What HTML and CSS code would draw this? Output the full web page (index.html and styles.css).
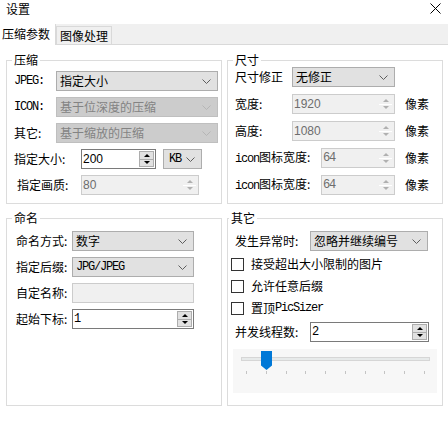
FILE: index.html
```html
<!DOCTYPE html>
<html lang="zh-CN">
<head>
  <meta charset="utf-8">
  <title>设置</title>
  <link rel="stylesheet" href="styles.css">
</head>
<body>

  <div class="titlebar">
    <span>设置</span>
    <svg class="close" width="11" height="11" viewBox="0 0 11 11"><path d="M0.5 0.5L10.5 10.5M10.5 0.5L0.5 10.5" stroke="#000" stroke-width="1" fill="none"/></svg>
  </div>

  <div class="tabs">
    <div class="tab active">压缩参数</div>
    <div class="tab">图像处理</div>
  </div>

  <div class="panel">

    <!-- 压缩 -->
    <fieldset class="group compress">
      <legend>压缩</legend>
      <div class="row">
        <span class="lbl w42 latin">JPEG:</span>
        <div class="select w162">指定大小<svg class="chev" width="9" height="5" viewBox="0 0 9 5"><path d="M0.5 0.5L4.5 4.5L8.5 0.5"/></svg></div>
      </div>
      <div class="row">
        <span class="lbl w42 latin">ICON:</span>
        <div class="select w162 off">基于位深度的压缩<svg class="chev" width="9" height="5" viewBox="0 0 9 5"><path d="M0.5 0.5L4.5 4.5L8.5 0.5"/></svg></div>
      </div>
      <div class="row">
        <span class="lbl w42">其它:</span>
        <div class="select w162 off">基于缩放的压缩<svg class="chev" width="9" height="5" viewBox="0 0 9 5"><path d="M0.5 0.5L4.5 4.5L8.5 0.5"/></svg></div>
      </div>
      <div class="row">
        <span class="lbl w67">指定大小:</span>
        <div class="spin w75"><span class="val">200</span><span class="btns"><i class="up"></i><i class="dn"></i></span></div>
        <div class="select w39 unit"><span class="latin">KB</span><svg class="chev" width="9" height="5" viewBox="0 0 9 5"><path d="M0.5 0.5L4.5 4.5L8.5 0.5"/></svg></div>
      </div>
      <div class="row">
        <span class="lbl w67 indent">指定画质:</span>
        <div class="spin w118 off"><span class="val">80</span><span class="btns"><i class="up"></i><i class="dn"></i></span></div>
      </div>
    </fieldset>

    <!-- 尺寸 -->
    <fieldset class="group size">
      <legend>尺寸</legend>
      <div class="row">
        <span class="lbl w57">尺寸修正</span>
        <div class="select w103">无修正<svg class="chev" width="9" height="5" viewBox="0 0 9 5"><path d="M0.5 0.5L4.5 4.5L8.5 0.5"/></svg></div>
      </div>
      <div class="row">
        <span class="lbl w57">宽度:</span>
        <div class="spin w103 off"><span class="val">1920</span><span class="btns"><i class="up"></i><i class="dn"></i></span></div>
        <span class="unit-lbl">像素</span>
      </div>
      <div class="row">
        <span class="lbl w57">高度:</span>
        <div class="spin w103 off"><span class="val">1080</span><span class="btns"><i class="up"></i><i class="dn"></i></span></div>
        <span class="unit-lbl">像素</span>
      </div>
      <div class="row">
        <span class="lbl w86"><span class="latin">icon</span>图标宽度:</span>
        <div class="spin w74 off"><span class="val latin">64</span><span class="btns"><i class="up"></i><i class="dn"></i></span></div>
        <span class="unit-lbl">像素</span>
      </div>
      <div class="row">
        <span class="lbl w86"><span class="latin">icon</span>图标宽度:</span>
        <div class="spin w74 off"><span class="val latin">64</span><span class="btns"><i class="up"></i><i class="dn"></i></span></div>
        <span class="unit-lbl">像素</span>
      </div>
    </fieldset>

    <!-- 命名 -->
    <fieldset class="group naming">
      <legend>命名</legend>
      <div class="row">
        <span class="lbl w56">命名方式:</span>
        <div class="select w122">数字<svg class="chev" width="9" height="5" viewBox="0 0 9 5"><path d="M0.5 0.5L4.5 4.5L8.5 0.5"/></svg></div>
      </div>
      <div class="row">
        <span class="lbl w56">指定后缀:</span>
        <div class="select w122"><span class="latin">JPG/JPEG</span><svg class="chev" width="9" height="5" viewBox="0 0 9 5"><path d="M0.5 0.5L4.5 4.5L8.5 0.5"/></svg></div>
      </div>
      <div class="row">
        <span class="lbl w56">自定名称:</span>
        <div class="text w122 off"></div>
      </div>
      <div class="row">
        <span class="lbl w56">起始下标:</span>
        <div class="spin w122"><span class="val latin">1</span><span class="btns"><i class="up"></i><i class="dn"></i></span></div>
      </div>
    </fieldset>

    <!-- 其它 -->
    <fieldset class="group other">
      <legend>其它</legend>
      <div class="row">
        <span class="lbl w75">发生异常时:</span>
        <div class="select w118">忽略并继续编号<svg class="chev" width="9" height="5" viewBox="0 0 9 5"><path d="M0.5 0.5L4.5 4.5L8.5 0.5"/></svg></div>
      </div>
      <label class="check"><span class="box"></span>接受超出大小限制的图片</label>
      <label class="check"><span class="box"></span>允许任意后缀</label>
      <label class="check"><span class="box"></span>置顶<span class="latin">PicSizer</span></label>
      <div class="row threads">
        <span class="lbl w75">并发线程数:</span>
        <div class="spin w119"><span class="val latin">2</span><span class="btns"><i class="up"></i><i class="dn"></i></span></div>
      </div>
      <div class="slider">
        <div class="track"></div>
        <div class="thumb" style="left: 28px"></div>
        <div class="ticks">
          <i></i><i></i><i></i><i></i><i></i><i></i><i></i><i></i><i></i><i></i>
        </div>
      </div>
    </fieldset>

  </div>

</body>
</html>
```

FILE: styles.css
```css
body { margin: 0; width: 448px; height: 429px; background: #fff; color: #000; font-family: "Noto Sans CJK SC", "Noto Sans", sans-serif; font-size: 12px; line-height: 18px; overflow: hidden; }
.latin { font-family: "Liberation Mono", monospace; font-size: 12px; letter-spacing: -1.2px; font-weight: normal; }

.titlebar { height: 24px; display: flex; justify-content: space-between; align-items: flex-start; padding: 0 7px 0 6px; box-sizing: border-box; }
.titlebar .close { margin-top: 3px; }

.tabs { height: 20px; background: #f0f0f0; border-bottom: 1px solid #d9d9d9; display: flex; align-items: flex-end; }
.tab { height: 17px; line-height: 17px; padding: 0 3px; border: 1px solid #d9d9d9; border-bottom: 0; background: #f0f0f0; font-size: 12px; }
.tab.active { height: 21px; line-height: 19px; width: 56px; box-sizing: border-box; padding: 0 2px; background: #fff; border-left: 0; border-top: 0; margin-bottom: -1px; }

.panel { display: grid; grid-template-columns: 216px 216px; column-gap: 5px; row-gap: 7px; padding: 8px 5px 0 6px; }

.group { margin: 0; min-width: 0; border: 1px solid #dcdcdc; padding: 0 6px 8px 7px; display: flex; flex-direction: column; }
.group legend { padding: 0 2px; margin-left: -2px; line-height: 14px; font-size: 12px; }
.compress { padding-top: 4px; gap: 6px; }
.size { padding-top: 0; gap: 7px; }
.naming { padding-top: 6px; gap: 6px; }
.naming .row { margin-left: 2px; }
.other { padding-top: 6px; padding-bottom: 12px; padding-left: 3px; }

.row { display: flex; align-items: center; height: 20px; }
.lbl { flex: none; white-space: nowrap; }
.lbl.indent { padding-left: 3px; box-sizing: border-box; }
.w42 { width: 42px; } .w56 { width: 56px; } .w57 { width: 57px; } .w67 { width: 67px; } .w75 { width: 75px; } .w86 { width: 86px; }
.other .lbl.w75 { width: 79px; padding-left: 4px; box-sizing: border-box; }

.select, .spin, .text { box-sizing: border-box; height: 20px; flex: none; display: flex; align-items: center; border: 1px solid #adadad; }
.w39 { width: 39px; } .w74 { width: 74px; } .w75 { width: 75px; } .w103 { width: 103px; } .w118 { width: 118px; } .w119 { width: 119px; } .w122 { width: 122px; } .w162 { width: 162px; }
.select.w39 { width: 39px; margin-left: 7px; }

.select { background: #e1e1e1; padding: 0 0 0 3px; justify-content: space-between; }
.select .chev { margin-right: 6px; fill: none; stroke: #5e5e5e; stroke-width: 1; }
.select.off { background: #cccccc; border-color: #bfbfbf; color: #838383; }
.select.off .chev { stroke: #b5b5b5; }
.select.unit { padding-left: 5px; }

.spin { background: #fff; border-color: #7a7a7a; padding-left: 1px; font-family: "Liberation Sans", sans-serif; font-size: 12px; justify-content: space-between; }
.spin .btns { align-self: stretch; width: 13px; margin: 1px; display: flex; flex-direction: column; border: 1px solid #adadad; background: #e1e1e1; color: #000; }
.spin .btns i { flex: 1; display: flex; align-items: center; justify-content: center; }
.spin .btns i + i { border-top: 1px solid #adadad; }
.spin .btns i::before { content: ""; border-left: 3px solid transparent; border-right: 3px solid transparent; }
.spin .btns .up::before { border-bottom: 3px solid currentColor; }
.spin .btns .dn::before { border-top: 3px solid currentColor; }
.spin.off { background: #f0f0f0; border-color: #cccccc; color: #6d6d6d; }
.spin.off .btns { border-color: transparent; background: #f0f0f0; color: #b0b0b0; }
.spin.off .btns i + i { border-top-color: #fff; }

.text.off { background: #f0f0f0; border-color: #cccccc; }

.unit-lbl { margin-left: 10px; }

.check { display: flex; align-items: center; height: 22px; }
.check:first-of-type { margin-top: 2px; }
.check .box { width: 13px; height: 13px; box-sizing: border-box; border: 1px solid #333; background: #fff; margin-right: 7px; }
.threads { margin-top: 3px; }

.slider { position: relative; margin-top: 7px; height: 44px; width: 204px; margin-left: 2px; background: #f7f7f7; box-sizing: border-box; padding: 8px 7px 0 8px; }
.track { height: 4px; box-sizing: border-box; background: #e7eaea; border: 1px solid #d6d6d6; }
.thumb { position: absolute; top: 2px; width: 11px; height: 19px; background: #0078d7; clip-path: polygon(0 0, 100% 0, 100% 76%, 50% 100%, 0 76%); }
.ticks { display: flex; justify-content: space-between; margin: 10px 5px 0 5px; }
.ticks i { width: 1px; height: 3px; background: #c4c4c4; }
```
